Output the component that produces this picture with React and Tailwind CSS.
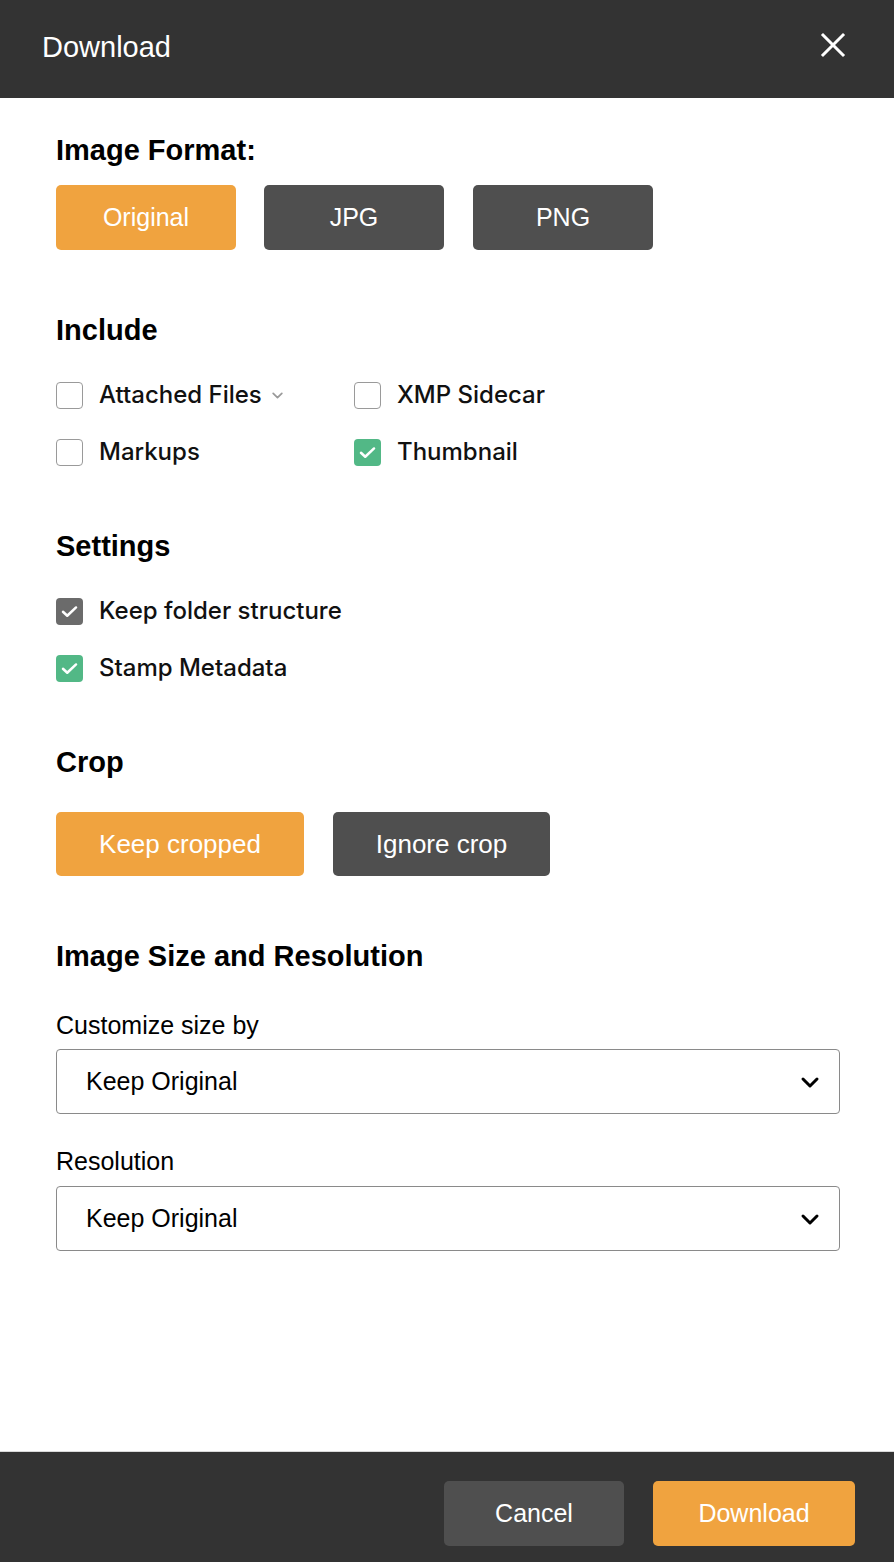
import React, { useState } from 'react';

const sans = { fontFamily: '"Liberation Sans", Arial, sans-serif' };
const inter = { fontFamily: 'Inter, "Noto Sans", sans-serif' };

const CheckIcon = () => (
  <svg className="w-[19px] h-[19px]" viewBox="0 0 16 16" fill="none" stroke="white" strokeWidth={2.1} strokeLinecap="round" strokeLinejoin="round">
    <path d="M2.5 8.2l3.6 3.4L13.5 4.6" />
  </svg>
);

const Checkbox = ({ checked, tone = 'green', label, caret, onToggle }) => (
  <button type="button" onClick={onToggle} className="flex items-center h-[32px] text-left">
    <span
      className={`w-[27px] h-[27px] rounded-[4px] flex items-center justify-center shrink-0 ${
        checked ? (tone === 'gray' ? 'bg-[#6b6b6b]' : 'bg-[#52b886]') : 'border border-[#9a9a9a] bg-white'
      }`}
    >
      {checked && <CheckIcon />}
    </span>
    <span className="ml-[16px] text-[24px] font-medium text-[#111] leading-[32px]" style={inter}>{label}</span>
    {caret && (
      <svg className="ml-[9px] w-[13px] h-[13px] mt-[1px]" viewBox="0 0 12 12" fill="none" stroke="#9a9a9a" strokeWidth={1.6} strokeLinecap="round" strokeLinejoin="round">
        <path d="M2 4l4 4 4-4" />
      </svg>
    )}
  </button>
);

const Toggle = ({ active, width, label, onClick, size = 'text-[25px]' }) => (
  <button
    type="button"
    onClick={onClick}
    className={`h-[65px] rounded-[5px] text-white ${size} ${width} ${active ? 'bg-[#f0a33f]' : 'bg-[#4f4f4f]'}`}
    style={sans}
  >
    {label}
  </button>
);

const Heading = ({ children, className = '' }) => (
  <h2 className={`text-[29px] font-bold leading-[32px] text-black ${className}`} style={sans}>{children}</h2>
);

const Select = ({ value }) => (
  <div className="h-[65px] border border-[#8a8a8a] rounded-[4px] flex items-center justify-between pl-[29px] pr-[19px]">
    <span className="text-[25px] text-black" style={sans}>{value}</span>
    <svg className="w-[20px] h-[14px]" viewBox="0 0 20 14" fill="none" stroke="black" strokeWidth={3} strokeLinecap="round" strokeLinejoin="round">
      <path d="M3 4l7 7 7-7" />
    </svg>
  </div>
);

export default function App() {
  const [format, setFormat] = useState('original');
  const [crop, setCrop] = useState('keep');
  const [checks, setChecks] = useState({
    attached: false,
    xmp: false,
    markups: false,
    thumbnail: true,
    folder: true,
    stamp: true,
  });
  const toggle = (k) => setChecks((c) => ({ ...c, [k]: !c[k] }));

  return (
    <div className="w-[894px] h-[1562px] flex flex-col bg-white">
      {/* Header */}
      <div className="h-[98px] bg-[#333333] flex items-center justify-between pl-[42px] pr-[46px] shrink-0">
        <span className="text-white text-[29px] mt-[-2px]" style={sans}>Download</span>
        <svg className="w-[30px] h-[30px] mt-[-8px]" viewBox="0 0 30 30" fill="none" stroke="white" strokeWidth={3} strokeLinecap="square">
          <path d="M5 5l20 20M25 5L5 25" />
        </svg>
      </div>

      {/* Body */}
      <div className="flex-1 pl-[56px] pr-[54px] pt-[36px]">
        <Heading>Image Format:</Heading>
        <div className="flex gap-[28px] mt-[19px]">
          <Toggle width="w-[180px]" label="Original" active={format === 'original'} onClick={() => setFormat('original')} />
          <Toggle width="w-[180px]" label="JPG" active={format === 'jpg'} onClick={() => setFormat('jpg')} />
          <Toggle width="w-[180px] ml-[1px]" label="PNG" active={format === 'png'} onClick={() => setFormat('png')} />
        </div>

        <Heading className="mt-[64px]">Include</Heading>
        <div className="grid grid-cols-[298px_auto] gap-y-[25px] mt-[33px]">
          <Checkbox label="Attached Files" caret checked={checks.attached} onToggle={() => toggle('attached')} />
          <Checkbox label="XMP Sidecar" checked={checks.xmp} onToggle={() => toggle('xmp')} />
          <Checkbox label="Markups" checked={checks.markups} onToggle={() => toggle('markups')} />
          <Checkbox label="Thumbnail" checked={checks.thumbnail} onToggle={() => toggle('thumbnail')} />
        </div>

        <Heading className="mt-[62px]">Settings</Heading>
        <div className="flex flex-col gap-[25px] mt-[33px]">
          <Checkbox label="Keep folder structure" tone="gray" checked={checks.folder} onToggle={() => toggle('folder')} />
          <Checkbox label="Stamp Metadata" checked={checks.stamp} onToggle={() => toggle('stamp')} />
        </div>

        <Heading className="mt-[62px]">Crop</Heading>
        <div className="flex gap-[29px] mt-[34px]">
          <Toggle width="w-[248px] !h-[64px]" size="text-[26px]" label="Keep cropped" active={crop === 'keep'} onClick={() => setCrop('keep')} />
          <Toggle width="w-[217px] !h-[64px]" size="text-[26px]" label="Ignore crop" active={crop === 'ignore'} onClick={() => setCrop('ignore')} />
        </div>

        <Heading className="mt-[64px]">Image Size and Resolution</Heading>
        <p className="mt-[38px] text-[25px] leading-[30px] text-black" style={sans}>Customize size by</p>
        <div className="mt-[9px]">
          <Select value="Keep Original" />
        </div>
        <p className="mt-[32px] text-[25px] leading-[30px] text-black" style={sans}>Resolution</p>
        <div className="mt-[10px]">
          <Select value="Keep Original" />
        </div>
      </div>

      {/* Footer */}
      <div className="h-[111px] bg-[#333333] border-t border-[#d9d9d9] shrink-0 flex justify-end items-start gap-[29px] pt-[29px] pr-[39px]">
        <button type="button" className="w-[180px] h-[65px] rounded-[5px] bg-[#4f4f4f] text-white text-[25px]" style={sans}>Cancel</button>
        <button type="button" className="w-[202px] h-[65px] rounded-[5px] bg-[#f0a33f] text-white text-[25px]" style={sans}>Download</button>
      </div>
    </div>
  );
}
